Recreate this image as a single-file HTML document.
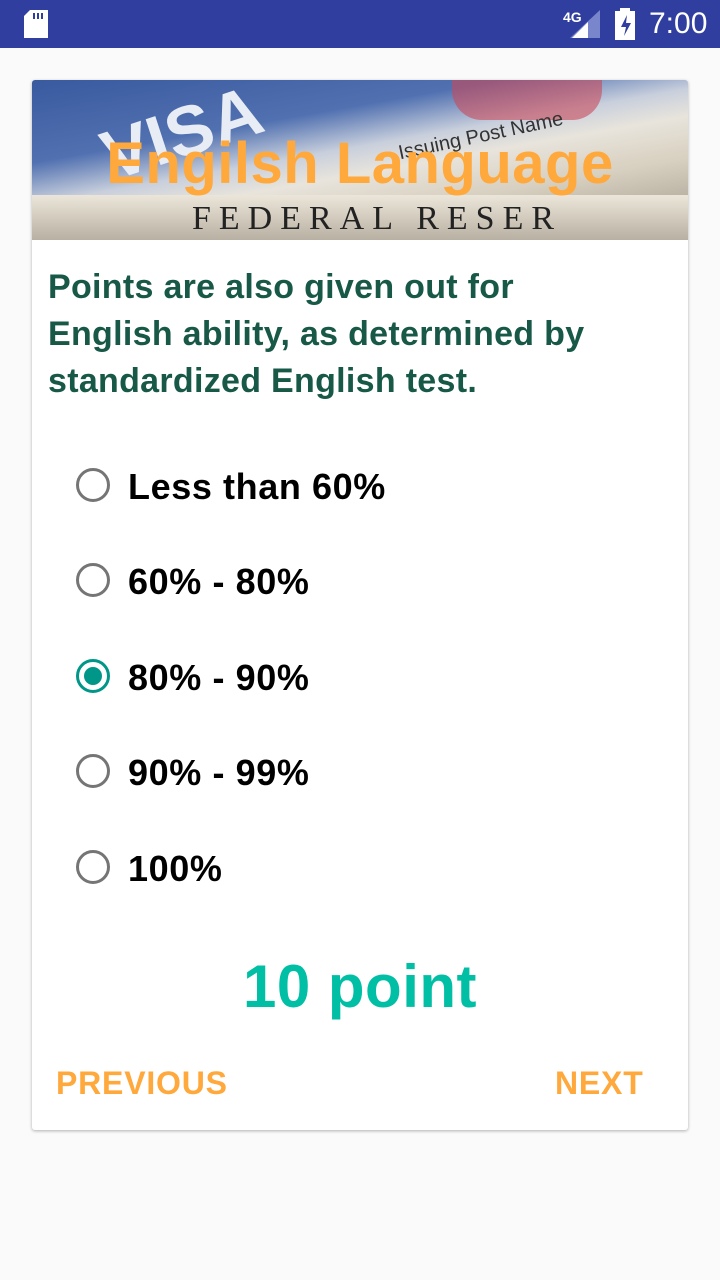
<!DOCTYPE html>
<html><head><meta charset="utf-8"><style>
body{margin:0;width:720px;height:1280px;background:#fafafa;font-family:"Liberation Sans",sans-serif;position:relative;overflow:hidden}
.sb{position:absolute;top:0;left:0;width:720px;height:48px;background:#303f9f;color:#fff}
.card{position:absolute;left:32px;top:80px;width:656px;height:1050px;background:#fff;border-radius:3px;box-shadow:0 1px 3px rgba(0,0,0,.3)}
.img{position:absolute;left:0;top:0;width:656px;height:160px;overflow:hidden;border-radius:3px 3px 0 0;
background:linear-gradient(170deg,#3a5aa0 0%,#5070b0 30%,#c8cfdc 45%,#e8e4dc 55%,#d8d0c0 70%,#9a9488 100%)}
.title{position:absolute;left:0;width:656px;top:50px;text-align:center;color:#ffa83c;font-weight:bold;font-size:58px;letter-spacing:0.5px}
.q{position:absolute;left:16px;top:184px;width:600px;color:#175846;font-weight:bold;font-size:34px;line-height:47px;letter-spacing:0.3px}
.opt{position:absolute;left:44px;height:40px;font-size:36px;font-weight:bold;color:#000;line-height:40px;letter-spacing:0.6px}
.opt i{position:absolute;left:0;top:1px;width:34px;height:34px;box-sizing:border-box;border:3px solid #757575;border-radius:50%}
.opt span{position:absolute;left:52px;white-space:nowrap}
.opt i.on{border-color:#009688}
.opt i.on:after{content:"";position:absolute;left:5px;top:5px;width:18px;height:18px;border-radius:50%;background:#009688}
.pts{position:absolute;left:0;width:656px;top:872px;text-align:center;color:#00bfa5;font-weight:bold;font-size:60px;letter-spacing:0.5px}
.btn{position:absolute;top:985px;color:#ffa83c;font-weight:bold;font-size:32px;letter-spacing:0.8px}
</style></head><body>
<div class="sb">
<svg style="position:absolute;left:24px;top:10px" width="24" height="28"><path d="M6 0h18v28H0V6z" fill="#fff"/><rect x="9" y="3" width="2" height="6" fill="#303f9f"/><rect x="13" y="3" width="2" height="6" fill="#303f9f"/><rect x="17" y="3" width="2" height="6" fill="#303f9f"/></svg>
<div style="position:absolute;left:563px;top:9px;font-size:14px;font-weight:bold">4G</div>
<svg style="position:absolute;left:570px;top:10px" width="30" height="30"><path d="M30 0V28H0z" fill="#7986cb"/><path d="M18 12V28H2z" fill="#fff"/></svg>
<svg style="position:absolute;left:614px;top:8px" width="22" height="32"><rect x="6" y="0" width="10" height="4" fill="#fff"/><rect x="1" y="3" width="20" height="29" fill="#fff"/><path d="M13 7l-6 12h5l-2 9 7-13h-5z" fill="#303f9f"/></svg>
<div style="position:absolute;left:649px;top:7px;font-size:30px">7:00</div>
</div>
<div class="card">
<div class="img">
<div style="position:absolute;left:60px;top:40px;font-size:70px;font-weight:bold;color:#e8ecf4;transform:rotate(-18deg);transform-origin:0 0">VISA</div>
<div style="position:absolute;left:420px;top:0;width:150px;height:40px;background:#c84a5a;opacity:.6;border-radius:0 0 30px 30px"></div>
<div style="position:absolute;left:365px;top:45px;font-size:20px;color:#333;transform:rotate(-12deg)">Issuing Post Name</div>
<div style="position:absolute;left:0;top:115px;width:656px;height:45px;background:linear-gradient(#ece6da,#b8b0a2)"></div>
<div style="position:absolute;left:160px;top:120px;font-size:34px;font-family:'Liberation Serif',serif;color:#222;letter-spacing:8px">FEDERAL RESER</div>
<div class="title">Engilsh Language</div>
</div>
<div class="q">Points are also given out for English ability, as determined by standardized English test.</div>
<div class="opt" style="top:387px"><i></i><span>Less than 60%</span></div>
<div class="opt" style="top:482px"><i></i><span>60% - 80%</span></div>
<div class="opt" style="top:578px"><i class="on"></i><span>80% - 90%</span></div>
<div class="opt" style="top:673px"><i></i><span>90% - 99%</span></div>
<div class="opt" style="top:769px"><i></i><span>100%</span></div>
<div class="pts">10 point</div>
<div class="btn" style="left:24px">PREVIOUS</div>
<div class="btn" style="left:523px">NEXT</div>
</div>
</body></html>
